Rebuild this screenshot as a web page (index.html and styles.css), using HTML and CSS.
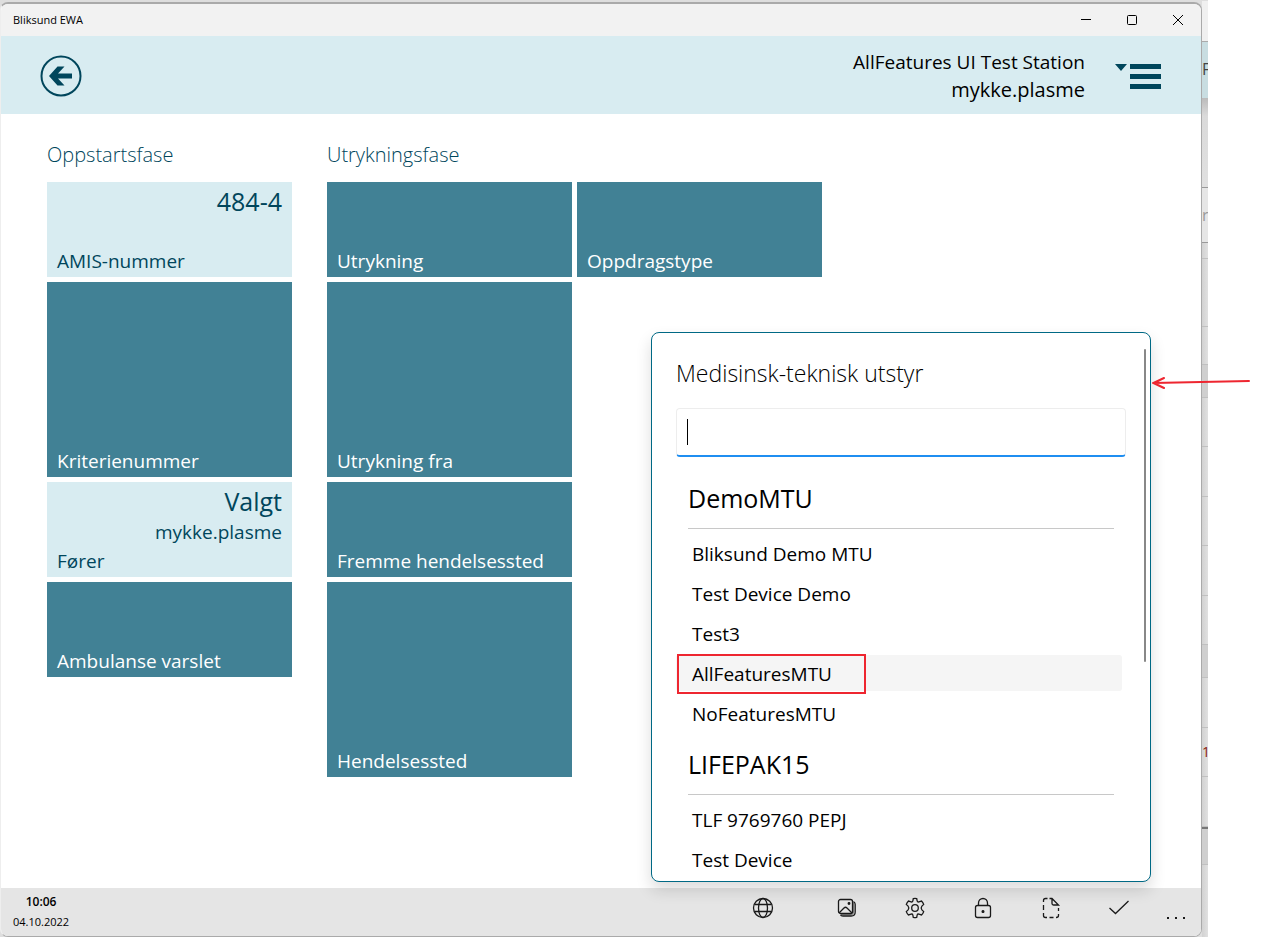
FILE: index.html
```html
<!DOCTYPE html>
<html lang="no">
<head>
<meta charset="utf-8">
<title>Bliksund EWA</title>
<link rel="stylesheet" href="styles.css">
</head>
<body>
<div class="desktop">
  <div class="window">
    <div class="titlebar">
      <span class="app-name">Bliksund EWA</span>
      <div class="caption-buttons">
        <button class="caption-button" aria-label="Minimer"><svg width="12" height="12" viewBox="0 0 12 12"><path d="M1 5.500h10"/></svg></button>
        <button class="caption-button" aria-label="Maksimer"><svg width="12" height="12" viewBox="0 0 12 12"><rect x="1.500" y="1.500" width="9" height="9" rx="1"/></svg></button>
        <button class="caption-button" aria-label="Lukk"><svg width="12" height="12" viewBox="0 0 12 12"><path d="M1 1l10 10M11 1L1 11"/></svg></button>
      </div>
    </div>
    <header class="header">
      <button class="back" aria-label="Tilbake"><svg width="42" height="42" viewBox="0 0 42 42"><circle cx="21" cy="21" r="19.500" fill="none" stroke="#00465c" stroke-width="2"/><path d="M9 21L17.500 11.500H24.500L18 18.500H32V23.500H18L24.500 30.500H17.500Z" fill="#00465c"/></svg></button>
      <div class="station">
        <span class="station-name">AllFeatures UI Test Station</span>
        <span class="station-user">mykke.plasme</span>
      </div>
      <button class="menu" aria-label="Meny"><svg width="46" height="26" viewBox="0 0 46 26"><path d="M0 1H12L6 8Z M15 1H46V6H15Z M15 11H46V16H15Z M15 21H46V26H15Z" fill="#00465c"/></svg></button>
    </header>
    <main class="board">
      <section class="phase">
        <h2 class="phase-title">Oppstartsfase</h2>
        <div class="tiles">
          <button class="tile done"><span class="value">484-4</span><span class="name">AMIS-nummer</span></button>
          <button class="tile tall"><span class="name">Kriterienummer</span></button>
          <button class="tile done"><span class="value">Valgt</span><span class="detail">mykke.plasme</span><span class="name">Fører</span></button>
          <button class="tile"><span class="name">Ambulanse varslet</span></button>
        </div>
      </section>
      <section class="phase">
        <h2 class="phase-title">Utrykningsfase</h2>
        <div class="tiles">
          <button class="tile"><span class="name">Utrykning</span></button>
          <button class="tile tall"><span class="name">Utrykning fra</span></button>
          <button class="tile"><span class="name">Fremme hendelsessted</span></button>
          <button class="tile tall"><span class="name">Hendelsessted</span></button>
          <button class="tile second"><span class="name">Oppdragstype</span></button>
        </div>
      </section>
    </main>
    <footer class="appbar">
      <div class="clock"><span class="time">10:06</span><span class="date">04.10.2022</span></div>
      <div class="commands">
        <button class="command wide" aria-label="Språk"><svg width="22" height="22" viewBox="0 0 22 22"><circle cx="11" cy="11" r="9.500"/><ellipse cx="11" cy="11" rx="4.500" ry="9.500"/><path d="M2.500 7.500h17M2.500 14.500h17"/></svg></button>
        <button class="command" aria-label="Bilder"><svg width="22" height="22" viewBox="0 0 22 22"><rect x="2.500" y="2.500" width="14" height="14" rx="2"/><circle cx="13" cy="6.500" r=".8" fill="#1a1a1a"/><path d="M3 16l5-5q1.500-1.500 3 0l5 5M18 5q1.200.6 1.200 2.500V15q0 4-4 4H7q-2 0-2.500-1.300"/><path d="M17.500 4v10.500q0 3-3 3H5" opacity=".5"/></svg></button>
        <button class="command" aria-label="Innstillinger"><svg width="22" height="22" viewBox="0 0 22 22"><circle cx="11" cy="11" r="3.300"/><path d="M9.300 1.600Q11 1.200 12.700 1.600L13.200 4.100Q13.600 5.300 14.900 4.900L17.500 4.100Q19 5.500 19.700 7.400L17.900 9.100Q16.400 11 17.900 12.900L19.700 14.600Q19 16.500 17.500 17.900L14.900 17.100Q13.600 16.700 13.200 17.900L12.700 20.400Q11 20.800 9.300 20.400L8.800 17.900Q8.400 16.700 7.100 17.100L4.500 17.900Q3 16.500 2.300 14.600L4.100 12.900Q5.600 11 4.100 9.100L2.300 7.400Q3 5.500 4.500 4.100L7.100 4.900Q8.400 5.300 8.800 4.100Z"/></svg></button>
        <button class="command" aria-label="Lås"><svg width="22" height="22" viewBox="0 0 22 22"><rect x="3.500" y="8.500" width="15" height="12" rx="2"/><path d="M6.500 8.500V6a4.500 4.500 0 0 1 9 0v2.500"/><circle cx="11" cy="14.500" r=".9" fill="#1a1a1a"/></svg></button>
        <button class="command" aria-label="Nytt dokument"><svg width="22" height="22" viewBox="0 0 22 22"><path d="M7.500 1.500H5.500q-2 0-2 2V5M3.500 8v5M3.500 16v2.500q0 2 2 2H7M9.500 20.500h4M16 20.500q2.500 0 2.500-2V17M18.500 14v-3M9.500 1.500H12l6.500 6.500H13.500q-1.500 0-1.500-1.500V1.500"/></svg></button>
        <button class="command" aria-label="Bekreft"><svg width="22" height="22" viewBox="0 0 22 22"><path d="M1.500 11l6 5.500L20.500 4"/></svg></button>
        <button class="command more" aria-label="Mer"><svg width="20" height="4" viewBox="0 0 20 4"><path d="M1 1h2v2H1zM9 1h2v2H9zM17 1h2v2h-2z" fill="#1a1a1a" stroke="none"/></svg></button>
      </div>
    </footer>
    <section class="flyout">
      <div class="flyout-scroll">
        <label class="flyout-title" for="device">Medisinsk-teknisk utstyr</label>
        <input class="search" id="device" type="text" autofocus>
        <h3 class="group-title">DemoMTU</h3>
        <button class="option">Bliksund Demo MTU</button>
        <button class="option">Test Device Demo</button>
        <button class="option">Test3</button>
        <button class="option selected">AllFeaturesMTU<span class="mark"></span></button>
        <button class="option">NoFeaturesMTU</button>
        <h3 class="group-title">LIFEPAK15</h3>
        <button class="option">TLF 9769760 PEPJ</button>
        <button class="option">Test Device</button>
      </div>
      <span class="caret"></span>
      <span class="scroll-thumb"></span>
      <svg class="arrow" width="100" height="14" viewBox="0 0 100 14"><path d="M1.500 7L97 5M12 2L1.500 7L12 12"/></svg>
    </section>
  </div>
  <div class="behind">
    <i class="strip top"></i>
    <i class="strip bar">F</i>
    <i class="strip s90 shade"></i>
    <i class="strip s55 ruled">r</i>
    <i class="strip s16"></i>
    <i class="strip s68"></i>
    <i class="strip s38"></i>
    <i class="strip s33 dark"></i>
    <i class="strip s49"></i>
    <i class="strip s50"></i>
    <i class="strip s49"></i>
    <i class="strip s50"></i>
    <i class="strip s49"></i>
    <i class="strip s33 dark"></i>
    <i class="strip s50"></i>
    <i class="strip s49 red">1</i>
    <i class="strip s50"></i>
    <i class="strip s38 edge"></i>
    <i class="strip rest"></i>
  </div>
</div>
</body>
</html>
```
FILE: styles.css
```css
* { box-sizing: border-box; }

body {
  margin: 0;
  background: #fff;
  color: #000;
  font-family: "Open Sans", "Noto Sans", sans-serif;
}

button {
  margin: 0;
  padding: 0;
  border: 0;
  background: none;
  color: inherit;
  font: inherit;
}

svg { display: block; }

.desktop {
  display: flex;
  min-height: 100vh;
  margin-right: 79px;
  padding-top: 1px;
  background: #dedede;
}

/* Application window */
.window {
  position: relative;
  display: flex;
  flex: 1;
  flex-direction: column;
  margin-top: 1px;
  border: 1px solid #aaa;
  border-top-width: 2px;
  border-left-color: #eee;
  border-radius: 8px;
  background: #fff;
}

.titlebar {
  display: flex;
  justify-content: space-between;
  height: 32px;
  border-radius: 7px 7px 0 0;
  background: #f2f2f2;
}

.app-name {
  padding-left: 12px;
  font-size: 11px;
  line-height: 32px;
}

.caption-buttons { display: flex; }

.caption-button {
  display: grid;
  width: 46px;
  place-items: center;
}

.caption-button svg {
  fill: none;
  stroke: #000;
}

.header {
  display: flex;
  align-items: center;
  height: 78px;
  padding: 1px 40px 0 39px;
  background: #d8ecf1;
}

.station {
  display: flex;
  flex: 1;
  flex-direction: column;
  align-items: flex-end;
  margin-right: 30px;
  line-height: 28px;
}

.station-name { font-size: 19px; }
.station-user { font-size: 20px; }

.board {
  display: flex;
  flex: 1;
  gap: 35px;
  padding: 26px 46px;
}

.phase-title {
  margin: 0 0 12px;
  color: #00465c;
  font-size: 20px;
  font-weight: 300;
  line-height: 30px;
}

.tiles {
  display: grid;
  grid-auto-columns: 245px;
  grid-auto-flow: column;
  grid-template-rows: repeat(6, 95px);
  gap: 5px;
}

.tile {
  display: flex;
  flex-direction: column;
  padding: 0 10px;
  background: #418195;
  color: #fff;
  font-size: 19px;
  text-align: left;
}

.tile.tall { grid-row-end: span 2; }

.tile.second {
  grid-row: 1;
  grid-column: 2;
}

.tile.done {
  background: #d8ecf1;
  color: #00465c;
}

.value,
.detail { align-self: flex-end; }

.value {
  font-size: 25px;
  line-height: 38px;
}

.detail { line-height: 24px; }

.name {
  margin-top: auto;
  line-height: 32px;
}

/* Bottom bar */
.appbar {
  display: flex;
  align-items: flex-start;
  justify-content: space-between;
  height: 48px;
  padding: 0 2px 0 12px;
  border-radius: 0 0 7px 7px;
  background: #e5e5e5;
}

.clock {
  display: flex;
  flex-direction: column;
  align-items: center;
  padding-top: 4px;
  font-size: 11px;
  line-height: 20px;
}

.time {
  font-size: 12px;
  font-weight: 600;
}

.commands {
  display: flex;
  align-items: flex-start;
}

.command {
  width: 68px;
  padding: 9px 23px;
}

.command.wide { margin-right: 16px; }

.command svg {
  fill: none;
  stroke: #1a1a1a;
  stroke-width: 1.3;
}

.command.more {
  width: 46px;
  padding: 28px 13px 0;
}

/* Equipment picker */
.flyout {
  position: absolute;
  right: 50px;
  bottom: 54px;
  width: 500px;
  height: 550px;
  border: 1px solid #006985;
  border-radius: 8px;
  background: #fff;
  box-shadow: 0 8px 16px rgba(0, 0, 0, .14);
}

.flyout-scroll {
  height: 100%;
  padding: 24px 24px 0;
  overflow: hidden;
}

.flyout-title {
  display: block;
  margin-bottom: 19px;
  font-size: 23px;
  font-weight: 300;
  line-height: 32px;
}

.search {
  display: block;
  width: 100%;
  height: 49px;
  margin-bottom: 12px;
  padding: 0 10px;
  border: 1px solid #ededed;
  border-bottom: 2px solid #1f8ef1;
  border-radius: 4px;
  outline: 0;
  caret-color: transparent;
  font: inherit;
  font-size: 20px;
}

.caret {
  position: absolute;
  top: 86px;
  left: 35px;
  width: 1px;
  height: 26px;
  background: #000;
}

.group-title {
  margin: 0 12px 6px;
  border-bottom: 1px solid #c8c8c8;
  font-size: 25px;
  font-weight: 400;
  line-height: 59px;
}

.option {
  position: relative;
  display: block;
  width: calc(100% - 4px);
  height: 36px;
  margin-bottom: 4px;
  padding: 2px 16px 0;
  border-radius: 3px;
  font-size: 19px;
  line-height: 34px;
  text-align: left;
}

.option.selected { background: #f5f5f5; }

.mark {
  position: absolute;
  top: -1px;
  left: 1px;
  width: 189px;
  height: 40px;
  border: 2px solid #ee2630;
}

.scroll-thumb {
  position: absolute;
  top: 16px;
  right: 4px;
  width: 2px;
  height: 313px;
  border-radius: 1px;
  background: #888;
}

.arrow {
  position: absolute;
  top: 43px;
  left: 500px;
  fill: none;
  stroke: #ee2630;
  stroke-linecap: round;
  stroke-width: 2;
}

/* Sliver of the window behind */
.behind {
  display: flex;
  flex-direction: column;
  width: 6px;
}

.strip {
  flex: none;
  overflow: hidden;
  border-bottom: 1px solid #c0c0c0;
  background: linear-gradient(90deg, #d2d2d2, #e0e0e0);
  font-size: 16px;
  font-style: normal;
}

.top {
  height: 41px;
  border-bottom-color: #aaa;
  background: #f0f0f0;
}

.bar {
  height: 56px;
  border: 0;
  background: #c8dde1;
  color: #444;
  line-height: 54px;
}

.shade {
  border-bottom-color: #999;
  background: linear-gradient(#bbb, #dadada 18px, #e0e0e0);
}

.ruled {
  border-bottom-color: #999;
  background: #e6e6e6;
  color: #999;
  line-height: 54px;
}

.dark { background: #cfcfcf; }

.red {
  color: #8c1c10;
  font-size: 14px;
  line-height: 48px;
}

.edge {
  border-top: 2px solid #777;
  background: #cfcfcf;
}

.rest {
  flex: 1;
  border: 0;
}

.s16 { height: 16px; }
.s33 { height: 33px; }
.s38 { height: 38px; }
.s49 { height: 49px; }
.s50 { height: 50px; }
.s55 { height: 55px; }
.s68 { height: 68px; }
.s90 { height: 90px; }
```
